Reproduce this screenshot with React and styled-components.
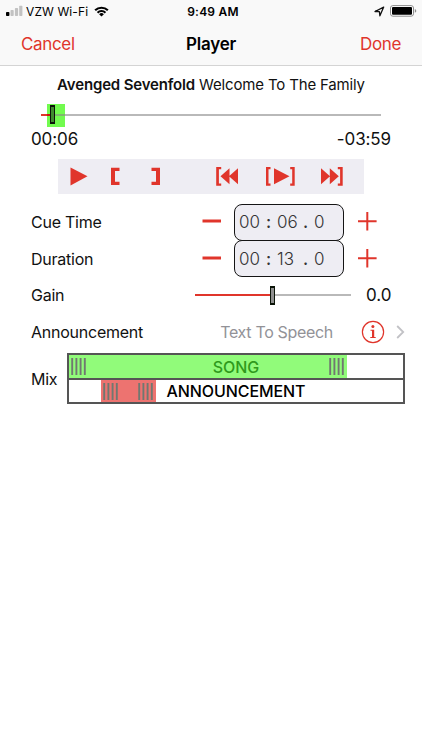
import styled, { createGlobalStyle } from "styled-components";

const RED = "#e0352b";
const INK = "#111111";

export default function App() {
  return (
    <>
      <GlobalStyle />
      <Screen>
        <StatusBar />
        <NavBar>
          <NavButton>Cancel</NavButton>
          <NavTitle>Player</NavTitle>
          <NavButton $right>Done</NavButton>
        </NavBar>
        <SongTitle>
          <b>Avenged Sevenfold</b> Welcome To The Family
        </SongTitle>
        <Timeline>
          <Played />
          <CueRange>
            <Thumb $fill="#3f8a2e" />
          </CueRange>
          <Track />
        </Timeline>
        <Times>
          <span>00:06</span>
          <span>-03:59</span>
        </Times>
        <Transport />
        <Settings>
          <TimeRow label="Cue Time" minutes="00" seconds="06" tenths="0" />
          <TimeRow label="Duration" minutes="00" seconds="13" tenths="0" />
          <Row>
            <Label>Gain</Label>
            <GainSlider>
              <GainFill />
              <Thumb $fill="#8f8f8f" />
              <Track />
            </GainSlider>
            <GainValue>0.0</GainValue>
          </Row>
          <Row>
            <Label>Announcement</Label>
            <Choice>Text To Speech</Choice>
            <InfoIcon />
            <Chevron />
          </Row>
        </Settings>
        <Mix>
          <Label $width="36px">Mix</Label>
          <MixBox>
            <MixLane>
              <SongBlock>
                <Grip />
                <Grip />
              </SongBlock>
              <LaneName $color="#2f9a1c">SONG</LaneName>
            </MixLane>
            <MixLane>
              <AnnouncementBlock>
                <Grip />
                <Grip />
              </AnnouncementBlock>
              <LaneName $color="#000">ANNOUNCEMENT</LaneName>
            </MixLane>
          </MixBox>
        </Mix>
      </Screen>
    </>
  );
}

function StatusBar() {
  return (
    <Status>
      <Carrier>
        <svg width="18" height="12" viewBox="0 0 18 12">
          <rect x="0" y="7" width="3.4" height="4" rx="0.8" fill="#000" />
          <rect x="4.5" y="5" width="3.2" height="6" rx="0.8" fill="#c2c2c2" />
          <rect x="8.9" y="3" width="3.2" height="8" rx="0.8" fill="#c2c2c2" />
          <rect x="13.2" y="0.8" width="3.2" height="10.2" rx="0.8" fill="#c2c2c2" />
        </svg>
        <span>VZW Wi-Fi</span>
        <svg width="15" height="11" viewBox="0 0 15 11">
          <path d="M0.4 3.6 A10.2 10.2 0 0 1 14.6 3.6 L13.1 5.1 A8 8 0 0 0 1.9 5.1Z" />
          <path d="M2.8 6 A6.7 6.7 0 0 1 12.2 6 L10.7 7.4 A4.6 4.6 0 0 0 4.3 7.4Z" />
          <path d="M5.1 8.2 A3.4 3.4 0 0 1 9.9 8.2 L7.5 10.6Z" />
        </svg>
      </Carrier>
      <Clock>9:49 AM</Clock>
      <Power>
        <svg width="11" height="11" viewBox="0 0 11 11">
          <path d="M1 5.5 L9.7 1.1 L5.9 9.8 L5.4 5.6Z" fill="none" stroke="#111" strokeWidth="1.3" strokeLinejoin="round" />
        </svg>
        <svg width="27" height="12" viewBox="0 0 27 12">
          <rect x="0.5" y="0.6" width="23" height="10.6" rx="2.4" fill="#fff" stroke="#8c8c8c" />
          <rect x="2" y="2.1" width="20" height="7.6" rx="1" fill="#000" />
          <path d="M24.8 4.1 Q26.3 4.6 26.3 5.9 Q26.3 7.2 24.8 7.7Z" fill="#8c8c8c" />
        </svg>
      </Power>
    </Status>
  );
}

function Transport() {
  return (
    <TransportBar>
      <svg width="305" height="35" viewBox="0 0 305 35" fill={RED}>
        <path d="M12.5 8.4 L29.5 17.3 L12.5 26.4Z" />
        <path d="M53 8.7 H61.5 V12 H57 V22.8 H61.5 V26 H53Z" />
        <path d="M102 8.7 H93.5 V12 H98 V22.8 H93.5 V26 H102Z" />
        <path d="M158.2 8 H163.2 V10.2 H160.9 V24.6 H163.2 V26.8 H158.2Z" />
        <path d="M171.5 9.3 V25.3 L162.5 17.3Z M180 9.3 V25.3 L171 17.3Z" />
        <path d="M208 8 H212.5 V10.2 H210.5 V24.6 H212.5 V26.8 H208Z" />
        <path d="M216 9.3 L231.5 17.3 L216 25.3Z" />
        <path d="M236.7 8 H232.2 V10.2 H234.2 V24.6 H232.2 V26.8 H236.7Z" />
        <path d="M263 9.3 L272 17.3 L263 25.3Z M271.8 9.3 L280.8 17.3 L271.8 25.3Z" />
        <path d="M284.7 8 H279.8 V10.2 H282.1 V24.6 H279.8 V26.8 H284.7Z" />
      </svg>
    </TransportBar>
  );
}

function TimeRow({ label, minutes, seconds, tenths }) {
  return (
    <Row>
      <Label $width="171px">{label}</Label>
      <svg width="19" height="20" viewBox="0 0 19 20">
        <path d="M0.5 9 H19" stroke={RED} strokeWidth="3" />
      </svg>
      <TimeField>
        <span>{minutes}</span>
        <Mark>:</Mark>
        <span>{seconds}</span>
        <Mark>.</Mark>
        <span>{tenths}</span>
      </TimeField>
      <svg width="19" height="20" viewBox="0 0 19 20">
        <path d="M0 9.2 H18.6 M9.3 0 V18.4" stroke={RED} strokeWidth="2" />
      </svg>
    </Row>
  );
}

function Grip() {
  return (
    <svg width="16" height="17" viewBox="0 0 16 17">
      <path d="M1.2 0 V17 M5.4 0 V17 M9.6 0 V17 M13.8 0 V17" stroke="#707870" strokeWidth="1.9" />
    </svg>
  );
}

function InfoIcon() {
  return (
    <svg width="24" height="24" viewBox="0 0 24 24">
      <circle cx="12" cy="12" r="10.6" fill="none" stroke={RED} strokeWidth="1.2" />
      <circle cx="11.9" cy="6.6" r="1.5" fill={RED} />
      <path d="M9.5 9.8 H13.2 V17 H14.7 V18 H9.3 V17 H11 V10.8 H9.5Z" fill={RED} />
    </svg>
  );
}

function Chevron() {
  return (
    <ChevronSvg width="9" height="14" viewBox="0 0 9 14">
      <path d="M1.2 1 L7.2 7 L1.2 13" fill="none" stroke="#c2c2c6" strokeWidth="1.8" />
    </ChevronSvg>
  );
}

const GlobalStyle = createGlobalStyle`
  * {
    box-sizing: border-box;
  }

  body {
    margin: 0;
    background: #fff;
  }

  svg {
    display: block;
    flex-shrink: 0;
  }
`;

const Screen = styled.main`
  width: 422px;
  height: 750px;
  overflow: hidden;
  background: #fff;
  color: ${INK};
  font-family: Inter, "Liberation Sans", sans-serif;
  font-size: 16px;
  white-space: nowrap;
`;

const Status = styled.header`
  height: 22px;
  padding: 0 5px 0 6px;
  display: grid;
  grid-template-columns: 1fr auto 1fr;
  align-items: center;
  background: #f9f9f9;
  color: #000;
  font-size: 12px;
`;

const Carrier = styled.div`
  display: flex;
  align-items: center;
  letter-spacing: 0.1px;

  span {
    margin: 0 6px 0 2px;
  }
`;

const Clock = styled.div`
  font-weight: 600;
  letter-spacing: 0.25px;
  margin-left: 3px;
`;

const Power = styled.div`
  display: flex;
  align-items: center;
  justify-content: flex-end;
  gap: 5px;
`;

const NavBar = styled.nav`
  height: 44px;
  padding: 0 21px;
  display: grid;
  grid-template-columns: 1fr auto 1fr;
  align-items: center;
  background: #f9f9f9;
  border-bottom: 1px solid #d4d4d4;
`;

const NavButton = styled.div`
  color: ${RED};
  font-size: 17px;
  letter-spacing: -0.35px;
  text-align: ${(props) => (props.$right ? "right" : "left")};
`;

const NavTitle = styled.h1`
  margin: 0;
  font-size: 17px;
  font-weight: 600;
  letter-spacing: -0.25px;
  color: #000;
`;

const SongTitle = styled.div`
  height: 38px;
  line-height: 38px;
  text-align: center;
  font-size: 15px;
  letter-spacing: -0.16px;

  b {
    font-weight: 600;
  }
`;

const Timeline = styled.div`
  height: 23px;
  padding: 0 41px;
  display: flex;
  align-items: center;
`;

const Track = styled.div`
  flex: 1;
  height: 2px;
  background: #b9b9b9;
  margin-top: -1px;
`;

const Played = styled.div`
  width: 6px;
  height: 2px;
  background: ${RED};
  margin-top: -1px;
`;

const CueRange = styled.div`
  width: 18px;
  height: 23px;
  padding: 0 0 3px 3px;
  display: flex;
  align-items: center;
  background: linear-gradient(#c9190f, #c9190f) 0 10px / 4px 2px no-repeat,
    linear-gradient(#7fb76c, #7fb76c) 8px 10px / 10px 2px no-repeat, #72fb4f;
`;

const Thumb = styled.div`
  width: 5px;
  height: 19px;
  border: 2px solid #0b1408;
  border-width: 2px 1.5px;
  background: ${(props) => props.$fill};
  flex-shrink: 0;
`;

const Times = styled.div`
  height: 23px;
  padding: 0 31px;
  display: flex;
  justify-content: space-between;
  align-items: center;
  font-size: 17px;
  letter-spacing: -0.1px;
`;

const TransportBar = styled.div`
  width: 306px;
  height: 35px;
  margin: 9px 0 0 58px;
  background: #eeedf3;
`;

const Settings = styled.section`
  margin-top: 10px;
`;

const Row = styled.div`
  height: 36.6px;
  padding: 0 17px 0 31px;
  display: flex;
  align-items: center;
`;

const Label = styled.div`
  width: ${(props) => props.$width || "auto"};
  flex-shrink: 0;
  font-size: 16px;
  letter-spacing: -0.24px;
`;

const TimeField = styled.div`
  width: 110px;
  height: 37px;
  margin: 0 14px 0 13px;
  padding-left: 4px;
  display: grid;
  grid-template-columns: 27px 11px 26px 11px 12px;
  align-items: center;
  border: 1.4px solid #151515;
  border-radius: 8px;
  background: #eeedf3;
  color: #333;
  font-size: 17px;
  font-weight: 300;
`;

const Mark = styled.span`
  font-weight: 500;
`;

const GainSlider = styled.div`
  width: 156px;
  height: 20px;
  margin-left: auto;
  display: flex;
  align-items: center;
`;

const GainFill = styled.div`
  width: 75px;
  height: 2px;
  margin-top: -1px;
  background: ${RED};
`;

const GainValue = styled.div`
  width: 54px;
  padding-left: 15px;
  font-size: 17px;
`;

const Choice = styled.div`
  margin-left: auto;
  margin-right: 28px;
  color: #929297;
  font-size: 16px;
  letter-spacing: -0.32px;
`;

const ChevronSvg = styled.svg`
  margin-left: 11px;
`;

const Mix = styled.section`
  padding: 3px 0 0 31px;
  display: flex;
  align-items: center;
`;

const MixBox = styled.div`
  width: 338px;
  height: 51px;
  border: 2px solid #555;
  display: grid;
  grid-template-rows: 1fr 1fr;
  row-gap: 2px;
  background: #555;
`;

const MixLane = styled.div`
  display: grid;
  align-items: center;
  background: #fff;

  > * {
    grid-area: 1 / 1;
  }
`;

const Block = styled.div`
  height: 100%;
  display: flex;
  justify-content: space-between;
  align-items: center;
`;

const SongBlock = styled(Block)`
  width: 278px;
  padding: 0 2px;
  background: #91fb7a;
`;

const AnnouncementBlock = styled(Block)`
  width: 55px;
  margin-left: 32px;
  padding: 0 2px;
  background: #ed7370;
`;

const LaneName = styled.div`
  text-align: center;
  font-size: 16px;
  font-weight: 500;
  letter-spacing: -0.08px;
  color: ${(props) => props.$color};
`;
